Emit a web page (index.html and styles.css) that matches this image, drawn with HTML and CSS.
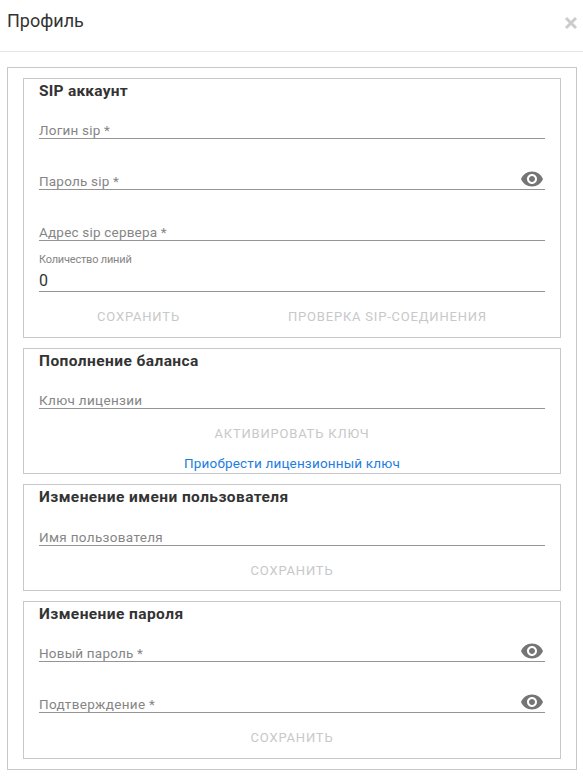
FILE: index.html
```html
<!DOCTYPE html>
<html lang="ru">
<head>
<meta charset="utf-8">
<title>Профиль</title>
<link rel="stylesheet" href="styles.css">
</head>
<body>
<svg class="sprite" aria-hidden="true">
  <symbol id="eye" viewBox="0 0 24 24"><path d="M12 4.5C7 4.5 2.73 7.61 1 12c1.73 4.39 6 7.5 11 7.5s9.27-3.11 11-7.5c-1.73-4.39-6-7.5-11-7.5zM12 17c-2.76 0-5-2.24-5-5s2.24-5 5-5 5 2.24 5 5-2.24 5-5 5zm0-8c-1.66 0-3 1.34-3 3s1.34 3 3 3 3-1.34 3-3-1.34-3-3-3z"/></symbol>
</svg>
<header class="header">
  <h1 class="header-title">Профиль</h1>
  <svg class="close" viewBox="0 0 14 14"><path d="M2 2L12 12M12 2L2 12"/></svg>
</header>
<main class="panel">
  <section class="card">
    <h2 class="title mixed">SIP аккаунт</h2>
    <div class="field first"><span class="label mixed">Логин sip *</span></div>
    <div class="field"><span class="label mixed">Пароль sip *</span><svg class="eye"><use href="#eye"/></svg></div>
    <div class="field"><span class="label mixed">Адрес sip сервера *</span></div>
    <div class="field filled"><span class="caption">Количество линий</span><span class="value">0</span></div>
    <div class="actions pair"><span class="button">Сохранить</span><span class="button">Проверка sip-соединения</span></div>
  </section>
  <section class="card">
    <h2 class="title">Пополнение баланса</h2>
    <div class="field first"><span class="label">Ключ лицензии</span></div>
    <div class="actions"><span class="button">Активировать ключ</span></div>
    <div class="buy"><a class="link">Приобрести лицензионный ключ</a></div>
  </section>
  <section class="card">
    <h2 class="title">Изменение имени пользователя</h2>
    <div class="field first user"><span class="label">Имя пользователя</span></div>
    <div class="actions short"><span class="button">Сохранить</span></div>
  </section>
  <section class="card">
    <h2 class="title">Изменение пароля</h2>
    <div class="field first"><span class="label mixed">Новый пароль *</span><svg class="eye"><use href="#eye"/></svg></div>
    <div class="field"><span class="label">Подтверждение *</span><svg class="eye"><use href="#eye"/></svg></div>
    <div class="actions"><span class="button">Сохранить</span></div>
  </section>
</main>
</body>
</html>
```
FILE: styles.css
```css
* { box-sizing: border-box; }
body { margin: 0; background: #fff; color: #333; font-family: Roboto, "Liberation Sans", sans-serif; }
.sprite { display: none; }
.header { height: 52px; border-bottom: 1px solid #e5e5e5; padding: 10px 5px 0 7px; display: flex; justify-content: space-between; }
.header-title { margin: 0; font-size: 18px; font-weight: 400; line-height: 22px; }
.close { width: 14px; height: 14px; margin-top: 6px; fill: none; stroke: #ccc; stroke-width: 3; }
.panel { margin: 15px 6px 0 7px; padding: 10px 15px; border: 1px solid #c8c8c8; display: flex; flex-direction: column; gap: 10px; }
.card { border: 1px solid #c8c8c8; padding: 0 15px; }
.title { margin: 0; height: 24px; font-size: 15.5px; line-height: 24px; font-weight: 700; letter-spacing: .42px; }
.title.mixed { letter-spacing: .24px; }
.field { height: 51px; border-bottom: 1px solid #949494; display: flex; justify-content: space-between; align-items: flex-end; white-space: nowrap; }
.first { height: 36px; }
.user { height: 37px; }
.filled { flex-direction: column; align-items: flex-start; justify-content: flex-end; }
.label { font-size: 13.5px; line-height: 15px; color: #858585; letter-spacing: .33px; }
.label.mixed { letter-spacing: .2px; }
.caption { font-size: 11px; line-height: 14px; color: #858585; margin-bottom: 4px; letter-spacing: -.2px; }
.value { font-size: 16px; line-height: 20px; }
.eye { width: 24px; height: 24px; margin: 0 1px -2px 0; fill: #757575; flex: none; }
.actions { height: 45px; padding-top: 15px; display: flex; justify-content: space-around; white-space: nowrap; }
.short { height: 44px; }
.pair { padding-left: 4px; padding-right: 4px; }
.button { font-size: 13px; line-height: 20px; color: #c8c8c8; text-transform: uppercase; letter-spacing: .8px; }
.buy { height: 19px; display: flex; justify-content: center; align-items: center; }
.link { font-size: 13.5px; line-height: 19px; color: #1e7de0; letter-spacing: .18px; }
```
